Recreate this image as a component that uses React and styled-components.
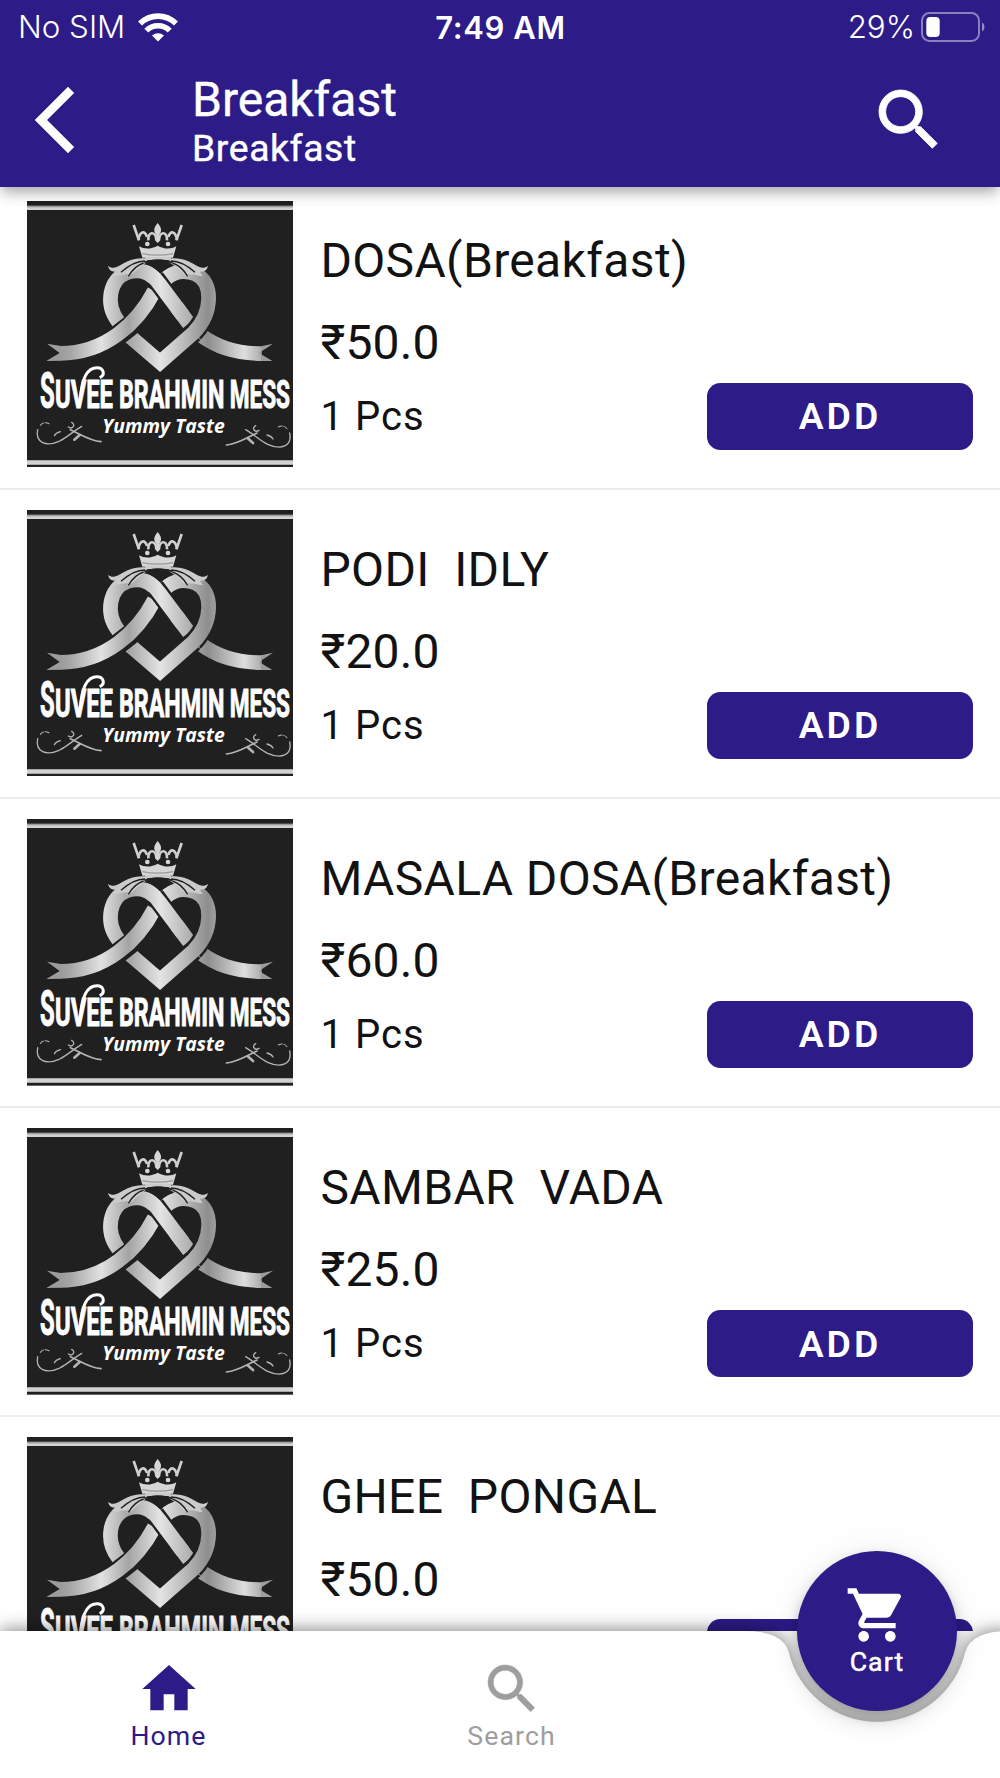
import styled, { createGlobalStyle } from "styled-components";

const PURPLE = "#2d1b87";
const INK = "#121212";
const MUTED = "#9e9e9e";

const ITEMS = [
  { name: "DOSA(Breakfast)", price: "50.0" },
  { name: "PODI  IDLY", price: "20.0" },
  { name: "MASALA DOSA(Breakfast)", price: "60.0" },
  { name: "SAMBAR  VADA", price: "25.0" },
  { name: "GHEE  PONGAL", price: "50.0" },
];

const GlobalStyle = createGlobalStyle`
  * { box-sizing: border-box; }
  body { margin: 0; background: #fff; font-family: Roboto, sans-serif; color: ${INK}; }
  button { font-family: inherit; border: 0; padding: 0; background: none; }
  svg { display: block; flex: none; }
`;

const Screen = styled.div`
  display: flex;
  flex-direction: column;
  width: 1000px;
  height: 1778px;
  overflow: hidden;
  background: #fff;
`;

const Header = styled.header`
  position: relative;
  z-index: 2;
  flex: none;
  height: 186.5px;
  background: ${PURPLE};
  color: #fff;
  box-shadow:
    0 5.3px 10.7px -2.7px rgba(0, 0, 0, 0.2),
    0 9px 12px -1px rgba(0, 0, 0, 0.12),
    0 2.7px 24px 0 rgba(0, 0, 0, 0.08);
`;

const StatusBar = styled.div`
  display: grid;
  grid-template-columns: 1fr auto 1fr;
  align-items: center;
  height: 53px;
  padding: 0 15px 0 18px;
  font-family: Inter, sans-serif;
  font-size: 31.3px;
  line-height: 53px;
`;

const Carrier = styled.div`
  display: flex;
  align-items: center;
  gap: 13px;
  padding-top: 1px;
  font-weight: 350;
`;

const Clock = styled.div`
  padding: 1px 2px 0 0;
  font-weight: 600;
  font-size: 31px;
  letter-spacing: 0.6px;
`;

const Power = styled.div`
  display: flex;
  justify-content: flex-end;
  align-items: center;
  gap: 6px;
  font-weight: 350;
`;

const AppBar = styled.div`
  display: flex;
  align-items: center;
  height: 133px;
  padding: 0 51px 0 35px;
`;

const IconButton = styled.button`
  width: 80px;
  height: 80px;
  color: #fff;
`;

const Titles = styled.div`
  flex: 1;
  padding: 4px 0 0 77px;
`;

const Title = styled.h1`
  margin: 0;
  font-size: 48px;
  font-weight: 400;
  line-height: 54px;
  letter-spacing: 0;
  -webkit-text-stroke: 0.4px currentColor;
`;

const Subtitle = styled.div`
  font-size: 37.33px;
  line-height: 43px;
  letter-spacing: 0.6px;
  -webkit-text-stroke: 0.4px currentColor;
`;

const List = styled.main`
  flex: 1;
  min-height: 0;
  margin-top: -6.2px;
  overflow: hidden;
`;

const Row = styled.article`
  display: flex;
  gap: 27px;
  height: 309.2px;
  padding: 20.3px 26.7px;
  border-bottom: 2px solid #ececec;
`;

const Details = styled.div`
  display: flex;
  flex: 1;
  flex-direction: column;
  padding-top: 28px;
`;

const Name = styled.h2`
  margin: 0;
  font-size: 48px;
  font-weight: 400;
  line-height: 64px;
  letter-spacing: 0.35px;
  white-space: pre;
`;

const Price = styled.div`
  margin-top: 18.2px;
  font-size: 48px;
  line-height: 64px;
  letter-spacing: 0.2px;
`;

const Foot = styled.div`
  display: flex;
  justify-content: space-between;
  align-items: center;
  margin-top: 7.8px;
  height: 67px;
`;

const Unit = styled.div`
  font-size: 40px;
  letter-spacing: 1.1px;
`;

const AddButton = styled.button`
  width: 266.7px;
  height: 67px;
  border-radius: 13.3px;
  background: ${PURPLE};
  color: #fff;
  font-size: 37.33px;
  font-weight: 600;
  letter-spacing: 3px;
`;

const BottomBar = styled.nav`
  position: relative;
  z-index: 1;
  flex: none;
  display: grid;
  grid-template-columns: 336px 350px 1fr;
  height: 147px;
`;

const BarShape = styled.svg`
  position: absolute;
  inset: 0;
  overflow: visible;
  filter: drop-shadow(0 -1px 9px rgba(0, 0, 0, 0.5));
`;

const Tab = styled.button`
  position: relative;
  display: flex;
  flex-direction: column;
  align-items: center;
  padding: 25.5px 0 0 1px;
  color: ${(p) => (p.$active ? PURPLE : MUTED)};
`;

const TabLabel = styled.span`
  font-size: 26.67px;
  line-height: 30px;
  letter-spacing: 1.1px;
`;

const CartButton = styled.button`
  position: absolute;
  left: 797px;
  top: -80px;
  display: flex;
  flex-direction: column;
  align-items: center;
  width: 160px;
  height: 160px;
  padding-top: 32px;
  border-radius: 50%;
  background: ${PURPLE};
  color: #fff;
  -webkit-text-stroke: 0.5px currentColor;
  box-shadow:
    0 6px 13px -2.7px rgba(0, 0, 0, 0.34),
    0 12px 27px -4px rgba(0, 0, 0, 0.12),
    0 2.7px 40px 0 rgba(0, 0, 0, 0.07);
`;

function Icon({ size, d, weight = 0 }) {
  return (
    <svg width={size} height={size} viewBox="0 0 24 24" fill="currentColor" stroke="currentColor" strokeWidth={weight}>
      <path d={d} />
    </svg>
  );
}

const BACK = "M11.67 3.87L9.9 2.1 0 12l9.9 9.9 1.77-1.77L3.54 12z";
const SEARCH =
  "M15.5 14h-.79l-.28-.27C15.41 12.59 16 11.11 16 9.5 16 5.91 13.09 3 9.5 3S3 5.91 3 9.5 5.91 16 9.5 16c1.61 0 3.09-.59 4.23-1.57l.27.28v.79l5 4.99L20.49 19l-4.99-5zm-6 0C7.01 14 5 11.99 5 9.5S7.01 5 9.5 5 14 7.01 14 9.5 11.99 14 9.5 14z";
const HOME = "M10 20v-6h4v6h5v-8h3L12 3 2 12h3v8z";
const CART =
  "M7 18c-1.1 0-1.99.9-1.99 2S5.9 22 7 22s2-.9 2-2-.9-2-2-2zM1 2v2h2l3.6 7.59-1.35 2.45c-.16.28-.25.61-.25.96 0 1.1.9 2 2 2h12v-2H7.42c-.14 0-.25-.11-.25-.25l.03-.12.9-1.63h7.45c.75 0 1.41-.41 1.75-1.03l3.58-6.49c.08-.14.12-.31.12-.48 0-.55-.45-1-1-1H5.21l-.94-2H1zm16 16c-1.1 0-1.99.9-1.99 2s.89 2 1.99 2 2-.9 2-2-.9-2-2-2z";

function Wifi() {
  return (
    <svg width="40" height="29" viewBox="0 0 40 29" fill="none" stroke="#fff">
      <path d="M2 10.6C12 .6 28 .6 38 10.6" strokeWidth="5.6" />
      <path d="M8.3 17.6C14.5 11.2 25.5 11.2 31.7 17.6" strokeWidth="5.6" />
      <path d="M20 28.6l-6-6c3.4-3.3 8.6-3.3 12 0z" fill="#fff" stroke="none" />
    </svg>
  );
}

function Battery() {
  return (
    <svg width="64" height="31" viewBox="0 0 64 31">
      <rect x="1" y="1" width="57" height="28" rx="7.5" fill="none" stroke="#fff" strokeOpacity=".45" strokeWidth="2" />
      <rect x="5.3" y="5" width="13.4" height="20" rx="4" fill="#fff" />
      <path d="M61 10.5c3.2 1.5 3.2 7.5 0 9z" fill="#fff" fillOpacity=".5" />
    </svg>
  );
}

function Flourish() {
  return (
    <g fill="none" stroke="#b4b4b4" strokeLinecap="round">
      <path d="M66 668c-12-6-22-2-28 8" strokeWidth="3" strokeDasharray="12 5" />
      <path d="M32 686c-8 40 26 52 66 34 24-12 36-26 66-44" strokeWidth="4" />
      <path d="M134 664c14 8 2 22-10 14" strokeWidth="4" />
      <path d="M130 686c32 14 56 32 92 36" strokeWidth="5" />
      <path d="M142 716l16-14" strokeWidth="8" />
      <path d="M82 704c4-8 10-10 18-12" strokeWidth="4" />
    </g>
  );
}

// Roboto squeezed horizontally into the given width
function Lettering({ x, width, size = 118, children }) {
  return (
    <g transform={`translate(${x} 622) scale(.57 1)`} fill="#fff" stroke="#fff" strokeWidth="3">
      <text fontFamily="Roboto" fontWeight="700" fontSize={size} textLength={width / 0.57} lengthAdjust="spacingAndGlyphs">
        {children}
      </text>
    </g>
  );
}

function Crown() {
  return (
    <g>
      <g fill="none" stroke="#cfcfcf" strokeWidth="8" strokeLinejoin="round">
        <path d="M320 72l16 46M464 72l-16 46" strokeWidth="8" />
        <path d="M334 116c4-24 20-30 26-8M450 116c-4-24-20-30-26-8" />
        <path d="M364 118c-2-28 22-28 24-2M420 118c2-28-22-28-24-2" />
      </g>
      <g fill="#d6d6d6">
        <path d="M392 66c14 16 12 26 4 36l4 16-8 8-8-8 4-16c-8-10-10-20 4-36z" />
        <circle cx="361" cy="129" r="7" />
        <circle cx="423" cy="129" r="7" />
        <path d="M336 136c18 10 38 8 56-2 18 10 38 12 56 2l-10 34h-92z" />
      </g>
      <path d="M346 158c30 6 62 6 92 0" fill="none" stroke="#999" strokeWidth="4" />
    </g>
  );
}

function Bow() {
  return (
    <g>
      <g fill="#cbcbcb">
        <path d="M354 168l76 0 6 12c-30-6-56-6-84 0z" />
        <path d="M352 172c-50-4-74 28-92 28-8 0-12-2-17-6 4 16 12 18 24 18l-8 14c20-2 32-8 44-6l-2 10c22-14 36-34 62-48z" />
        <path d="M434 172c50-4 74 28 92 28 8 0 12-2 17-6-4 16-12 18-24 18l8 14c-20-2-32-8-44-6l2 10c-22-14-36-34-62-48z" />
      </g>
      <g fill="none" stroke="#202020" strokeWidth="4">
        <path d="M354 180c-30 0-52 16-72 34M350 186c-20 6-34 20-46 40" />
        <path d="M432 180c30 0 52 16 72 34M436 186c20 6 34 20 46 40" />
        <path d="M352 184c26-8 56-8 84 0" strokeWidth="5" />
      </g>
    </g>
  );
}

function Logo() {
  return (
    <svg width="266.7" height="266.7" viewBox="0 0 800 800">
      <defs>
        <linearGradient id="silver" gradientUnits="userSpaceOnUse" x1="60" y1="0" x2="740" y2="0">
          <stop offset="0" stopColor="#8f8f8f" />
          <stop offset=".1" stopColor="#a5a5a5" />
          <stop offset=".24" stopColor="#e2e2e2" />
          <stop offset=".36" stopColor="#a4a4a4" />
          <stop offset=".5" stopColor="#e4e4e4" />
          <stop offset=".62" stopColor="#b4b4b4" />
          <stop offset=".71" stopColor="#8e8e8e" />
          <stop offset=".87" stopColor="#dedede" />
          <stop offset="1" stopColor="#8a8a8a" />
        </linearGradient>
      </defs>
      <rect width="800" height="800" fill="#202020" />
      <path d="M0 14h800v13H0zM0 778h800v13H0z" fill="#d2d2d2" />
      <path d="M0 17h800" stroke="#8c8c8c" strokeWidth="3" />
      <g fill="none" stroke="url(#silver)" strokeWidth="44">
        <path d="M518 400C566 436 620 457 704 458" />
        <path d="M274 362C234 310 246 234 302 214C346 202 372 216 398 250L486 368" />
        <path d="M312 409L400 484L500 395" stroke="#202020" strokeWidth="60" />
        <path d="M500 395C518 376 532 350 539 330" stroke="#202020" strokeWidth="60" />
        <path d="M306 404L399 484L500 395C558 335 560 242 505 219C474 207 440 210 414 236" />
        <path d="M384 280C334 370 240 457 100 457" stroke="#202020" strokeWidth="60" />
        <path d="M382 270C332 366 236 457 100 457" />
        <path d="M384 231L448 317" stroke="#202020" strokeWidth="58" />
        <path d="M350 212C370 216 384 231 398 250L468 344" />
      </g>
      <path d="M102 435L60 428 98 456 58 480 102 479zM702 436L738 428 696 456 736 480 702 480z" fill="#9c9c9c" />
      <Crown />
      <Bow />
      <Lettering x={39} width={44} size={152}>S</Lettering>
      <Lettering x={84} width={174}>UVEE</Lettering>
      <Lettering x={276} width={316}>BRAHMIN</Lettering>
      <Lettering x={608} width={181}>MESS</Lettering>
      <path d="M160 596C164 528 184 500 210 500c20 0 26 22 8 30" fill="none" stroke="#fff" strokeWidth="9" />
      <text x="226" y="697" fill="#fff" fontFamily="Open Sans" fontSize="56" fontWeight="700" fontStyle="italic" textLength="367" lengthAdjust="spacingAndGlyphs">
        Yummy Taste
      </text>
      <Flourish />
      <g transform="matrix(-1 0 0 1 820 10)">
        <Flourish />
      </g>
    </svg>
  );
}

export default function App() {
  return (
    <Screen>
      <GlobalStyle />
      <Header>
        <StatusBar>
          <Carrier>
            No SIM
            <Wifi />
          </Carrier>
          <Clock>7:49 AM</Clock>
          <Power>
            29%
            <Battery />
          </Power>
        </StatusBar>
        <AppBar>
          <IconButton aria-label="Back">
            <Icon size={80} d={BACK} weight={0.15} />
          </IconButton>
          <Titles>
            <Title>Breakfast</Title>
            <Subtitle>Breakfast</Subtitle>
          </Titles>
          <IconButton aria-label="Search">
            <Icon size={80} d={SEARCH} weight={0.25} />
          </IconButton>
        </AppBar>
      </Header>
      <List>
        {ITEMS.map((item) => (
          <Row key={item.name}>
            <Logo />
            <Details>
              <Name>{item.name}</Name>
              <Price>₹{item.price}</Price>
              <Foot>
                <Unit>1 Pcs</Unit>
                <AddButton>ADD</AddButton>
              </Foot>
            </Details>
          </Row>
        ))}
      </List>
      <BottomBar>
        <BarShape width="1000" height="147" viewBox="0 0 1000 147">
          <path
            d="M0 0H743.7Q783.7 0 788.9 21.5A90.67 90.67 0 0 0 965.1 21.5Q970.3 0 1010.3 0V147H0Z"
            fill="#fff"
          />
        </BarShape>
        <Tab $active>
          <Icon size={64} d={HOME} />
          <TabLabel>Home</TabLabel>
        </Tab>
        <Tab>
          <Icon size={64} d={SEARCH} weight={0.2} />
          <TabLabel>Search</TabLabel>
        </Tab>
        <CartButton>
          <Icon size={64} d={CART} />
          <TabLabel>Cart</TabLabel>
        </CartButton>
      </BottomBar>
    </Screen>
  );
}
